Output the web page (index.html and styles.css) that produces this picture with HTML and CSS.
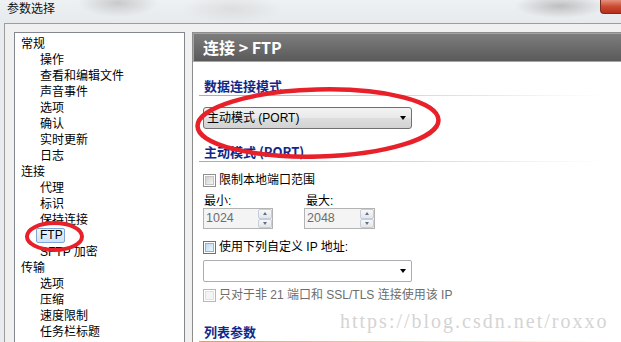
FILE: index.html
```html
<!DOCTYPE html>
<html lang="zh">
<head>
<meta charset="utf-8">
<link rel="stylesheet" href="styles.css">
</head>
<body>
<div class="titlebar">
  <span class="title">参数选择</span>
  <div class="close"></div>
</div>
<div class="client">
  <div class="tree">
    <div class="p">常规</div>
    <div class="c">操作</div>
    <div class="c">查看和编辑文件</div>
    <div class="c">声音事件</div>
    <div class="c">选项</div>
    <div class="c">确认</div>
    <div class="c">实时更新</div>
    <div class="c">日志</div>
    <div class="p">连接</div>
    <div class="c">代理</div>
    <div class="c">标识</div>
    <div class="c">保持连接</div>
    <div class="c"><span class="sel">FTP</span></div>
    <div class="c">SFTP 加密</div>
    <div class="p">传输</div>
    <div class="c">选项</div>
    <div class="c">压缩</div>
    <div class="c">速度限制</div>
    <div class="c">任务栏标题</div>
    <div class="p">显示</div>
  </div>
  <div class="panel">
    <div class="header">连接 &gt; FTP</div>
    <div class="content">
      <div class="heading">数据连接模式</div>
      <div class="combo combo-mode"><span class="combo-text">主动模式 (PORT)</span><span class="arrow"></span></div>
      <div class="heading heading-2">主动模式 (PORT)</div>
      <div class="row row-1"><span class="cb"></span><span>限制本地端口范围</span></div>
      <div class="pair labels"><span class="col">最小:</span><span class="col">最大:</span></div>
      <div class="pair">
        <div class="spin col"><span class="val">1024</span><span class="btns"><span class="up"></span><span class="dn"></span></span></div>
        <div class="spin col"><span class="val">2048</span><span class="btns"><span class="up"></span><span class="dn"></span></span></div>
      </div>
      <div class="row row-2"><span class="cb cb-hot"></span><span>使用下列自定义 IP 地址:</span></div>
      <div class="combo combo-ip"><span class="combo-text"></span><span class="arrow"></span></div>
      <div class="row row-3 disabled"><span class="cb cb-off"></span><span>只对于非 21 端口和 SSL/TLS 连接使用该 IP</span></div>
      <div class="heading heading-3">列表参数</div>
    </div>
  </div>
</div>
<div class="watermark">https://blog.csdn.net/roxxo</div>
<svg class="marks" width="621" height="342" viewBox="0 0 621 342">
  <ellipse cx="318" cy="123" rx="120.5" ry="33.5" fill="none" stroke="#e8202a" stroke-width="4.5" transform="rotate(-1.5 318 123)"/>
  <ellipse cx="54.5" cy="236.5" rx="27.5" ry="13.5" fill="none" stroke="#e8202a" stroke-width="4"/>
</svg>
</body>
</html>
```
FILE: styles.css
```css
body {
  margin: 0;
  width: 621px;
  height: 342px;
  overflow: hidden;
  position: relative;
  background: #e9ecef;
  font-family: "Liberation Sans", "Noto Sans CJK SC", sans-serif;
  font-size: 12px;
  color: #000;
}

.titlebar {
  height: 23px;
  display: flex;
  align-items: flex-start;
  padding-left: 7px;
  background:
    radial-gradient(ellipse 40px 14px at 118px 3px, rgba(170, 170, 170, 0.55), transparent),
    radial-gradient(ellipse 50px 14px at 232px 9px, rgba(205, 205, 205, 0.5), transparent),
    radial-gradient(ellipse 45px 12px at 560px 6px, rgba(150, 150, 150, 0.55), transparent),
    linear-gradient(#eef1f3, #e6eaed);
}

.title {
  font-family: "Noto Sans CJK SC", sans-serif;
  font-size: 12px;
  line-height: 16px;
  color: #111;
}

.close {
  margin-left: auto;
  width: 20px;
  height: 13px;
  border: 1px solid #7d2c20;
  border-top: none;
  border-right: none;
  border-radius: 0 0 0 4px;
  background: linear-gradient(#e4917d, #cc4a33 50%, #b53019);
}

.client {
  margin-left: 4px;
  border-top: 1px solid #9d9d9d;
  border-left: 1px solid #9d9d9d;
  background: #f0f0f0;
  display: flex;
  align-items: flex-start;
  padding: 8px 0 0 9px;
  height: 400px;
}

.tree {
  flex: none;
  width: 169px;
  height: 330px;
  border: 1px solid #828790;
  background: #fff;
  padding-top: 3px;
  overflow: hidden;
}

.tree .p,
.tree .c {
  height: 16px;
  line-height: 16px;
  white-space: nowrap;
}

.tree .p { padding-left: 6px; }
.tree .c { padding-left: 25px; }

.sel {
  display: inline-block;
  vertical-align: top;
  line-height: 13px;
  margin-left: -4px;
  padding: 0 1px 0 3px;
  border: 1px solid #7fa6d6;
  border-radius: 2px;
  background: linear-gradient(#eef5fd, #cfe3f8);
}

.panel {
  flex: none;
  width: 440px;
  height: 330px;
  margin-left: 7px;
  border: 1px solid #8d8d8d;
  background: #fff;
}

.header {
  height: 27px;
  line-height: 27px;
  border: 1px solid #f0952c;
  background: linear-gradient(#7d7d7d, #5a5a5a);
  color: #fff;
  font-family: "Noto Sans CJK SC", sans-serif;
  font-weight: bold;
  font-size: 16px;
  padding-left: 9px;
}

.content {
  display: flex;
  flex-direction: column;
  align-items: flex-start;
  padding: 16px 0 0 10px;
}

.heading {
  width: 400px;
  margin-left: -4px;
  padding: 0 0 2px 5px;
  line-height: 16px;
  font-family: "Noto Sans CJK SC", sans-serif;
  font-size: 13px;
  font-weight: bold;
  color: #10288a;
  background: linear-gradient(to right, #f09a4c, #f8c896 45%, #fdeedf 80%, rgba(255, 255, 255, 0)) left bottom / 100% 1px no-repeat;
}

.heading-2 { margin-top: 15px; }
.heading-3 { margin-top: 21px; }

.combo {
  box-sizing: border-box;
  width: 209px;
  height: 22px;
  display: flex;
  align-items: center;
  padding: 0 4px 0 3px;
}

.combo-mode {
  margin-top: 11px;
  border: 1px solid #707070;
  border-radius: 3px;
  background: linear-gradient(#f3f3f3, #e9e9e9 50%, #dedede 51%, #d2d2d2);
}

.combo-ip {
  margin-top: 5px;
  border: 1px solid #abadb3;
  border-radius: 2px;
  background: #fff;
}

.combo-text {
  flex: 1;
  line-height: 16px;
}

.arrow {
  width: 0;
  height: 0;
  border-left: 3.5px solid transparent;
  border-right: 3.5px solid transparent;
  border-top: 4px solid #000;
  margin-right: 1px;
}

.row {
  display: flex;
  align-items: center;
  height: 16px;
  line-height: 16px;
  white-space: nowrap;
}

.row-1 { margin-top: 10px; }
.row-2 { margin-top: 10px; }
.row-3 { margin-top: 5px; }

.disabled { color: #6d6d6d; }

.cb {
  box-sizing: border-box;
  width: 13px;
  height: 13px;
  margin-right: 3px;
  border: 1px solid #8e8f8f;
  padding: 1px;
  background: #fff;
}

.cb::before {
  content: "";
  display: block;
  width: 100%;
  height: 100%;
  box-sizing: border-box;
  border: 1px solid #c3c3c3;
  background: linear-gradient(135deg, #cfcfcf, #f6f6f6);
}

.cb-hot { border-color: #3c7fb1; }
.cb-hot::before {
  border-color: #86b7df;
  background: linear-gradient(135deg, #bcdcf6, #eef7fe);
}

.cb-off { border-color: #b7b7b7; }
.cb-off::before {
  border-color: #e2e2e2;
  background: #f4f4f4;
}

.pair {
  display: flex;
  gap: 31px;
}

.labels {
  margin-top: 6px;
  line-height: 14px;
}

.labels .col { width: 70px; padding-left: 1px; }

.spin {
  box-sizing: border-box;
  width: 70px;
  height: 21px;
  border: 1px solid #b3b3b3;
  background: #f4f4f4;
  display: flex;
}

.spin + .spin { width: 71px; }

.val {
  flex: 1;
  padding-left: 2px;
  line-height: 19px;
  color: #6d6d6d;
  font-size: 12.5px;
}

.btns {
  width: 14px;
  display: flex;
  flex-direction: column;
}

.btns span {
  flex: 1;
  display: flex;
  align-items: center;
  justify-content: center;
  border: 1px solid #c5ceda;
  border-radius: 2px;
  background: linear-gradient(#f8f8f8, #e4e6e9);
}

.btns .up::before,
.btns .dn::before {
  content: "";
  width: 0;
  height: 0;
  border-left: 2.5px solid transparent;
  border-right: 2.5px solid transparent;
}

.btns .up::before { border-bottom: 3px solid #60708c; }
.btns .dn::before { border-top: 3px solid #60708c; }

.watermark {
  position: absolute;
  left: 340px;
  top: 311px;
  font-family: "Liberation Serif", serif;
  font-size: 20px;
  line-height: 20px;
  letter-spacing: 2px;
  color: #d4d4d4;
  white-space: nowrap;
}

.marks {
  position: absolute;
  left: 0;
  top: 0;
  pointer-events: none;
}
```
